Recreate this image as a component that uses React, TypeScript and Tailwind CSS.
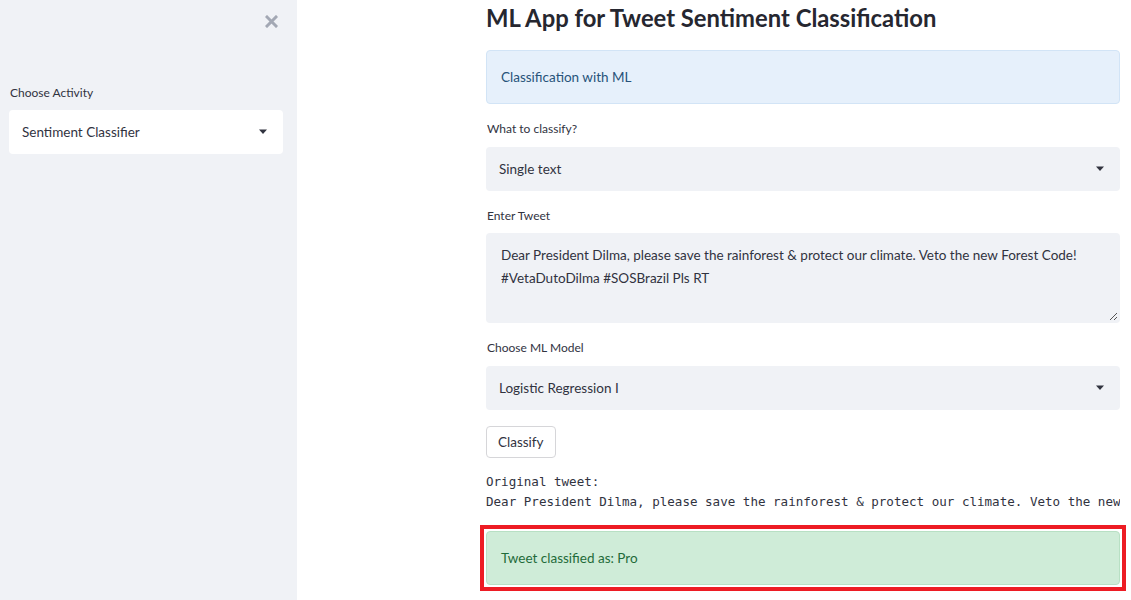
function Caret() {
  return (
    <svg width="10" height="6" viewBox="0 0 10 6" className="shrink-0">
      <path d="M1 0.5h8L5 5z" fill="#31333f" />
    </svg>
  );
}

function SelectBox({ value, white = false }: { value: string; white?: boolean }) {
  return (
    <div
      className={`flex h-[44px] items-center justify-between rounded-[4px] pl-[13px] pr-[15px] text-[13.5px] text-[#31333f] ${
        white ? 'bg-white' : 'bg-[#f0f2f6]'
      }`}
    >
      <span>{value}</span>
      <Caret />
    </div>
  );
}

function Label({ children }: { children: string }) {
  return <div className="text-[12px] leading-[16px] text-[#31333f]">{children}</div>;
}

export default function App() {
  return (
    <div
      className="flex h-[600px] w-[1131px] overflow-hidden bg-white text-[#31333f]"
      style={{ fontFamily: 'Lato, "Open Sans", sans-serif' }}
    >
      <aside className="w-[297px] shrink-0 bg-[#f0f2f6] pl-[9px] pr-[14px]">
        <div className="flex justify-end pr-[5px] pt-[15px]">
          <svg width="13" height="13" viewBox="0 0 13 13">
            <path d="M2 2l9 9M11 2l-9 9" stroke="#a3a8b4" strokeWidth="3" strokeLinecap="square" />
          </svg>
        </div>
        <div className="mt-[57px] pl-[1px]">
          <Label>Choose Activity</Label>
        </div>
        <div className="mt-[9px]">
          <SelectBox value="Sentiment Classifier" white />
        </div>
      </aside>

      <main className="min-w-0 flex-1 pl-[189px] pr-[11px]">
        <h1 className="mt-[3px] text-[23.8px] font-bold leading-[31px] text-[#262730]">
          ML App for Tweet Sentiment Classification
        </h1>

        <div className="mt-[16px] flex h-[54px] items-center rounded-[4px] border border-[#d2e4f6] bg-[#e6f0fb] px-[14px] text-[13.5px] text-[#27537a]">
          Classification with ML
        </div>

        <div className="mt-[17px] pl-[1px]">
          <Label>What to classify?</Label>
        </div>
        <div className="mt-[10px]">
          <SelectBox value="Single text" />
        </div>

        <div className="mt-[17px] pl-[1px]">
          <Label>Enter Tweet</Label>
        </div>
        <div className="relative mt-[9px] h-[90px] rounded-[4px] bg-[#f0f2f6] px-[15px] pt-[11px] text-[13.5px] leading-[23px] text-[#31333f]">
          Dear President Dilma, please save the rainforest &amp; protect our climate. Veto the new Forest Code!
          <br />
          #VetaDutoDilma #SOSBrazil Pls RT
          <svg width="9" height="9" viewBox="0 0 9 9" className="absolute bottom-[2px] right-[2px]">
            <path d="M8 1L1 8M8 5L5 8" stroke="#555" strokeWidth="1" />
          </svg>
        </div>

        <div className="mt-[17px] pl-[1px]">
          <Label>Choose ML Model</Label>
        </div>
        <div className="mt-[10px]">
          <SelectBox value="Logistic Regression I" />
        </div>

        <button className="mt-[16px] h-[32px] rounded-[4px] border border-[#d6d6d9] bg-white px-[11px] text-[13.5px] text-[#31333f]">
          Classify
        </button>

        <pre
          className="mt-[14px] overflow-hidden whitespace-pre text-[12.55px] leading-[20px] text-[#31333f]"
          style={{ fontFamily: '"DejaVu Sans Mono", "Liberation Mono", monospace' }}
        >
          {'Original tweet:\nDear President Dilma, please save the rainforest & protect our climate. Veto the new Forest Code!'}
        </pre>

        <div className="-mx-[6px] mt-[13px] border-[4px] border-[#ed1c24] p-[2px]">
          <div className="flex h-[54px] items-center rounded-[4px] border border-[#b8e0c4] bg-[#cfecd8] px-[14px] text-[13.5px] text-[#1f6b3a]">
            Tweet classified as: Pro
          </div>
        </div>
      </main>
    </div>
  );
}
